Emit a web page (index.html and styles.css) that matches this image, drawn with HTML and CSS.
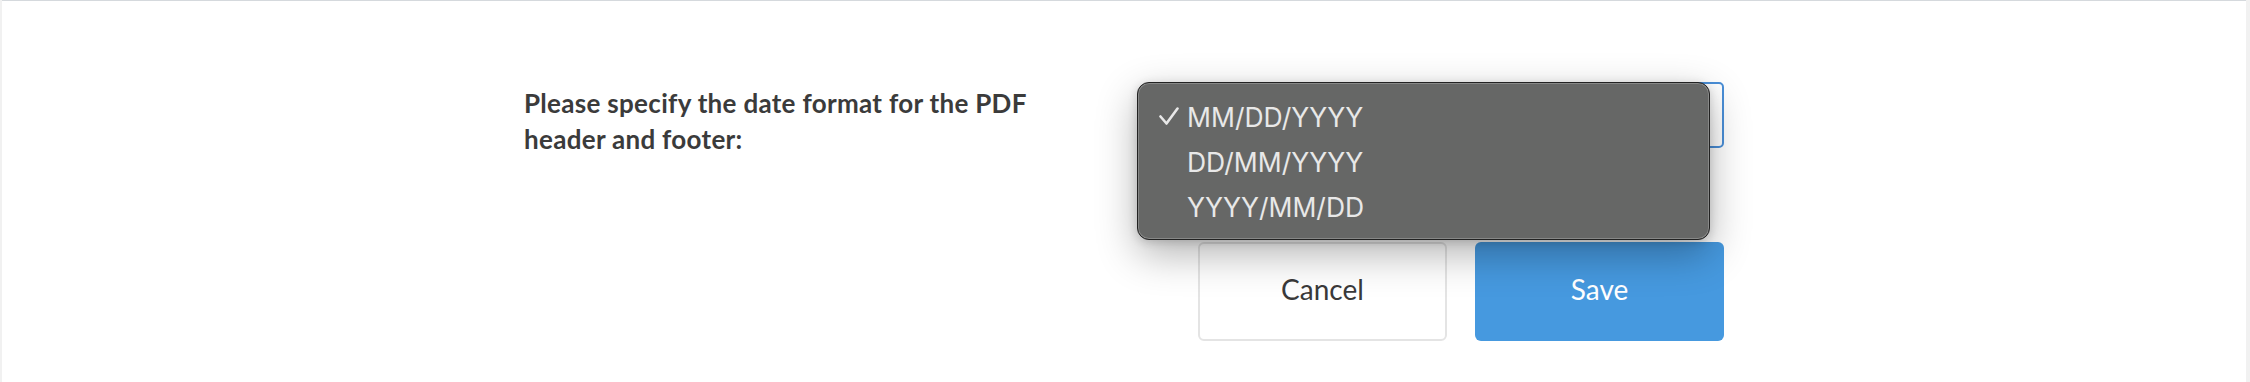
FILE: index.html
```html
<!DOCTYPE html>
<html lang="en">
<head>
<meta charset="utf-8">
<title>Date format</title>
<link rel="stylesheet" href="styles.css">
</head>
<body>
<div class="card">
  <div class="form">
    <label class="label" for="fmt">Please specify the date format for the PDF header and footer:</label>
    <div class="controls">
      <div class="select" id="fmt">
        <div class="popup">
          <div class="option">
            <svg class="check" width="20" height="20" viewBox="0 0 20 20"><path d="M1.5 9.5 L7.5 16.5 L18.5 1.5" fill="none" stroke="#e8e8e8" stroke-width="2.6" stroke-linecap="round" stroke-linejoin="round"/></svg>
            <span>MM/DD/YYYY</span>
          </div>
          <div class="option"><span class="spacer"></span><span>DD/MM/YYYY</span></div>
          <div class="option"><span class="spacer"></span><span>YYYY/MM/DD</span></div>
        </div>
      </div>
      <div class="actions">
        <button class="btn btn-cancel" type="button">Cancel</button>
        <button class="btn btn-save" type="button">Save</button>
      </div>
    </div>
  </div>
</div>
</body>
</html>
```
FILE: styles.css
```css
html, body {
  margin: 0;
  padding: 0;
}
body {
  background: #f1f1f1;
  height: 382px;
  overflow: hidden;
}
.card {
  margin: 0 4px 0 2px;
  height: 382px;
  box-sizing: border-box;
  background: #ffffff;
  border-top: 1px solid #d5d9dd;
  padding-top: 81px;
}
.form {
  width: 1200px;
  margin: 0 auto;
  display: grid;
  grid-template-columns: 674px 526px;
}
.label {
  font-family: Lato, "Liberation Sans", sans-serif;
  font-weight: 700;
  font-size: 26px;
  line-height: 36px;
  letter-spacing: 0.3px;
  color: #3b3b3b;
  width: 540px;
  margin-top: 3px;
}
.controls {
  display: flex;
  flex-direction: column;
}
.select {
  position: relative;
  height: 66px;
  box-sizing: border-box;
  border: 2px solid #4a8fd8;
  border-radius: 5px;
  background: #fff;
}
.popup {
  position: absolute;
  left: -63px;
  top: -2px;
  width: 573px;
  height: 158px;
  box-sizing: border-box;
  padding: 11px 0 10px 0;
  background: #666766;
  border: 1px solid #222222;
  border-radius: 12px;
  box-shadow: inset 0 0 0 1px rgba(255,255,255,0.22), 0 14px 40px rgba(0,0,0,0.3), 0 2px 10px rgba(0,0,0,0.16);
  z-index: 2;
}
.option {
  display: flex;
  align-items: center;
  height: 45px;
  padding-left: 21px;
  font-family: Inter, "Noto Sans", sans-serif;
  font-size: 26.5px;
  color: #e8e8e8;
}
.check, .spacer {
  width: 20px;
  height: 20px;
  flex: none;
  margin-right: 8px;
}
.actions {
  display: flex;
  gap: 28px;
  margin-top: 94px;
}
.btn {
  width: 249px;
  height: 99px;
  border-radius: 6px;
  font-family: Lato, "Liberation Sans", sans-serif;
  font-size: 28px;
  padding: 0 0 6px 0;
  cursor: pointer;
}
.btn-cancel {
  background: #ffffff;
  border: 2px solid #e4e4e4;
  color: #3a3a3a;
}
.btn-save {
  background: #4699df;
  border: none;
  color: #ffffff;
}
```
